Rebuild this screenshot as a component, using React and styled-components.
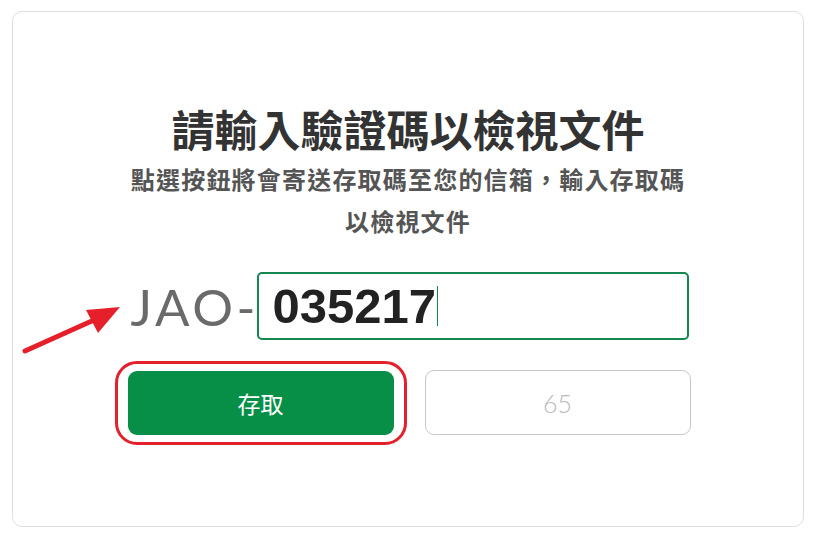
import React from 'react';
import styled, { createGlobalStyle } from 'styled-components';

const GlobalStyle = createGlobalStyle`
  html, body {
    margin: 0;
    padding: 0;
    background: #ffffff;
  }
  body {
    font-family: 'Noto Sans CJK TC', 'Noto Sans', sans-serif;
  }
`;

const Page = styled.div`
  padding: 11px 20px 16px 12px;
  width: 824px;
  height: 543px;
  box-sizing: border-box;
  position: relative;
`;

const Card = styled.div`
  width: 792px;
  height: 516px;
  box-sizing: border-box;
  border: 1px solid #dedede;
  border-radius: 10px;
  display: flex;
  flex-direction: column;
  align-items: center;
  padding-top: 86px;
`;

const Title = styled.h1`
  margin: 0;
  font-size: 43px;
  line-height: 60px;
  font-weight: 700;
  color: #333333;
  font-family: 'Noto Sans CJK TC', sans-serif;
`;

const Subtitle = styled.p`
  margin: 0;
  width: 570px;
  text-align: center;
  font-size: 24px;
  letter-spacing: 1.2px;
  line-height: 42px;
  font-weight: 700;
  color: #555555;
  font-family: 'Noto Sans CJK TC', sans-serif;
`;

const CodeRow = styled.div`
  display: flex;
  align-items: center;
  margin-top: 29px;
  margin-left: 3px;
`;

const Prefix = styled.span`
  width: 126px;
  overflow: hidden;
  white-space: nowrap;
  font-family: Lato, 'Open Sans', sans-serif;
  font-size: 51px;
  color: #6a6a6a;
  letter-spacing: 3.5px;
  line-height: 67px;
  padding-top: 2px;
`;

const CodeInput = styled.div`
  width: 432px;
  height: 68px;
  box-sizing: border-box;
  border: 2px solid #13874f;
  border-radius: 5px;
  display: flex;
  align-items: center;
  padding-left: 14px;
  font-family: 'Liberation Sans', Arial, sans-serif;
  font-weight: 700;
  font-size: 49px;
  color: #222222;
`;

const Caret = styled.span`
  display: inline-block;
  width: 1px;
  height: 40px;
  background: #13874f;
  margin-left: 1px;
`;

const ButtonRow = styled.div`
  display: flex;
  align-items: center;
  gap: 18px;
  margin-top: 21px;
  margin-left: -11px;
`;

const Highlight = styled.div`
  border: 3.5px solid #e3202b;
  border-radius: 22px;
  padding: 7px 10px;
`;

const AccessButton = styled.button`
  width: 266px;
  height: 64px;
  border: none;
  border-radius: 9px;
  background: #078f48;
  color: #ffffff;
  font-family: 'Noto Sans CJK TC', sans-serif;
  font-size: 23px;
  font-weight: 400;
  cursor: pointer;
`;

const TimerButton = styled.button`
  width: 266px;
  height: 65px;
  border: 1px solid #c8c8c8;
  border-radius: 9px;
  background: #ffffff;
  color: #b8b8b8;
  font-family: Lato, 'Open Sans', sans-serif;
  font-size: 25px;
  font-weight: 300;
  margin-bottom: 1px;
`;

const Arrow = styled.svg`
  position: absolute;
  left: 0;
  top: 290px;
  width: 130px;
  height: 70px;
  pointer-events: none;
`;

export default function App() {
  return (
    <>
      <GlobalStyle />
      <Page>
        <Card>
          <Title>請輸入驗證碼以檢視文件</Title>
          <Subtitle>點選按鈕將會寄送存取碼至您的信箱，輸入存取碼以檢視文件</Subtitle>
          <CodeRow>
            <Prefix>JAO-</Prefix>
            <CodeInput>
              035217
              <Caret />
            </CodeInput>
          </CodeRow>
          <ButtonRow>
            <Highlight>
              <AccessButton>存取</AccessButton>
            </Highlight>
            <TimerButton disabled>65</TimerButton>
          </ButtonRow>
        </Card>
        <Arrow viewBox="0 290 130 70">
          <line x1="25" y1="351" x2="94" y2="320" stroke="#e5202a" strokeWidth="5" strokeLinecap="round" />
          <polygon points="120,307 86,310 98,333" fill="#e5202a" />
        </Arrow>
      </Page>
    </>
  );
}
